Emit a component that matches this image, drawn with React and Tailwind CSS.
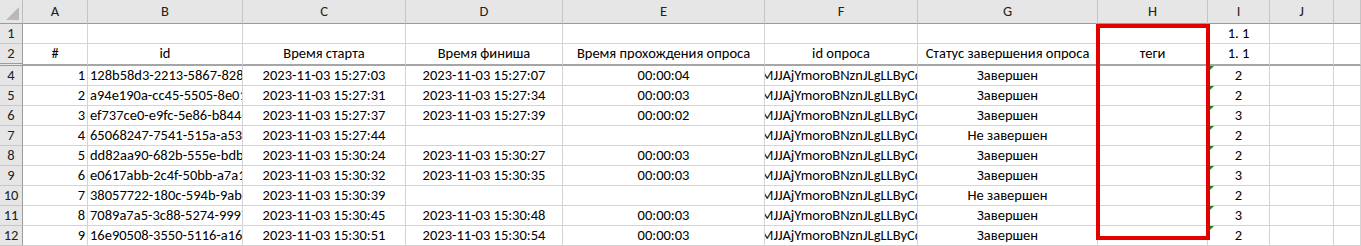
import React from 'react';

const cols = ['A', 'B', 'C', 'D', 'E', 'F', 'G', 'H', 'I', 'J', ''];

const rows = [
  ['4', '1', '128b58d3-2213-5867-8282-9f3c1a', '2023-11-03 15:27:03', '2023-11-03 15:27:07', '00:00:04', 'Завершен', '2', 'ok'],
  ['5', '2', 'a94e190a-cc45-5505-8e01-77ab2c', '2023-11-03 15:27:31', '2023-11-03 15:27:34', '00:00:03', 'Завершен', '2', 'ok'],
  ['6', '3', 'ef737ce0-e9fc-5e86-b844-0d1e5a', '2023-11-03 15:27:37', '2023-11-03 15:27:39', '00:00:02', 'Завершен', '3', 'ok'],
  ['7', '4', '65068247-7541-515a-a539-c4b810', '2023-11-03 15:27:44', '', '', 'Не завершен', '2', 'no'],
  ['8', '5', 'dd82aa90-682b-555e-bdb5-61e0f3', '2023-11-03 15:30:24', '2023-11-03 15:30:27', '00:00:03', 'Завершен', '2', 'ok'],
  ['9', '6', 'e0617abb-2c4f-50bb-a7a1-9a4c2e', '2023-11-03 15:30:32', '2023-11-03 15:30:35', '00:00:03', 'Завершен', '3', 'ok'],
  ['10', '7', '38057722-180c-594b-9ab7-3e2f11', '2023-11-03 15:30:39', '', '', 'Не завершен', '2', 'no'],
  ['11', '8', '7089a7a5-3c88-5274-9997-b5d07c', '2023-11-03 15:30:45', '2023-11-03 15:30:48', '00:00:03', 'Завершен', '3', 'ok'],
  ['12', '9', '16e90508-3550-5116-a168-2f9e4d', '2023-11-03 15:30:51', '2023-11-03 15:30:54', '00:00:03', 'Завершен', '2', 'ok'],
];

const surveyId = 'MJJAjYmoroBNznJLgLLByCq7';

const cell = 'h-full border-r border-b border-[#d4d4d4] bg-white overflow-hidden whitespace-nowrap flex items-center';
const rowHead = 'h-full bg-[#e6e6e6] border-r border-[#9b9b9b] border-b border-b-[#c8c8c8] flex items-center justify-center text-[#222]';

function Flag() {
  return (
    <div className="absolute left-0 top-0 w-0 h-0 border-t-[6px] border-t-[#1e8a1e] border-r-[6px] border-r-transparent" />
  );
}

export default function App() {
  return (
    <div
      className="relative w-[1361px] h-[246px] overflow-hidden bg-white text-[14.5px] text-black"
      style={{ fontFamily: 'Calibri, Carlito, "Noto Sans", sans-serif' }}
    >
      <div className="grid grid-cols-[23px_65px_155px_163px_157px_202px_153px_180px_110px_62px_64px_1fr] grid-rows-[24px_20px_22px_repeat(9,20px)]">
        {/* corner */}
        <div className="relative h-full bg-[#e6e6e6] border-r border-[#bdbdbd] border-b border-b-[#9b9b9b]">
          <div className="absolute right-[3px] bottom-[3px] w-0 h-0 border-l-[13px] border-l-transparent border-b-[13px] border-b-[#b9b9b9]" />
        </div>
        {cols.map((c, i) => (
          <div
            key={i}
            className="h-full bg-[#e6e6e6] border-r border-[#c4c4c4] border-b border-b-[#9b9b9b] flex items-center justify-center text-[#222]"
          >
            {c}
          </div>
        ))}

        {/* row 1 */}
        <div className={rowHead}>1</div>
        <div className={cell} />
        <div className={cell} />
        <div className={cell} />
        <div className={cell} />
        <div className={cell} />
        <div className={cell} />
        <div className={cell} />
        <div className={cell} />
        <div className={cell + ' justify-center'}>1. 1</div>
        <div className={cell} />
        <div className={cell} />

        {/* row 2 - headers */}
        <div className="h-full bg-[#e6e6e6] border-r border-[#9b9b9b] border-b-[3px] border-double border-b-[#9b9b9b] flex items-center justify-center text-[#222]">2</div>
        {['#', 'id', 'Время старта', 'Время финиша', 'Время прохождения опроса', 'id опроса', 'Статус завершения опроса', 'теги', '1. 1', '', ''].map((t, i) => (
          <div
            key={i}
            className="h-full border-r border-[#d4d4d4] border-b-2 border-b-[#a6a6a6] bg-white overflow-hidden whitespace-nowrap flex items-center justify-center"
          >
            {t}
          </div>
        ))}

        {rows.map((r) => (
          <React.Fragment key={r[0]}>
            <div className={rowHead}>{r[0]}</div>
            <div className={cell + ' justify-end pr-[2px]'}>{r[1]}</div>
            <div className={cell + ' pl-[2px]'}>{r[2]}</div>
            <div className={cell + ' justify-center'}>{r[3]}</div>
            <div className={cell + ' justify-center'}>{r[4]}</div>
            <div className={cell + ' justify-center'}>{r[5]}</div>
            <div className={cell}>
              <span className="-ml-[4px]">{surveyId}</span>
            </div>
            <div className={cell + ' justify-center'}>{r[6]}</div>
            <div className={cell} />
            <div className={cell + ' relative justify-center'}>
              <Flag />
              {r[7]}
            </div>
            <div className={cell} />
            <div className={cell} />
          </React.Fragment>
        ))}
      </div>

      {/* red highlight around column H */}
      <div className="absolute left-[1096px] top-[24px] w-[114px] h-[216px] border-4 border-[#e50000]" />
    </div>
  );
}
